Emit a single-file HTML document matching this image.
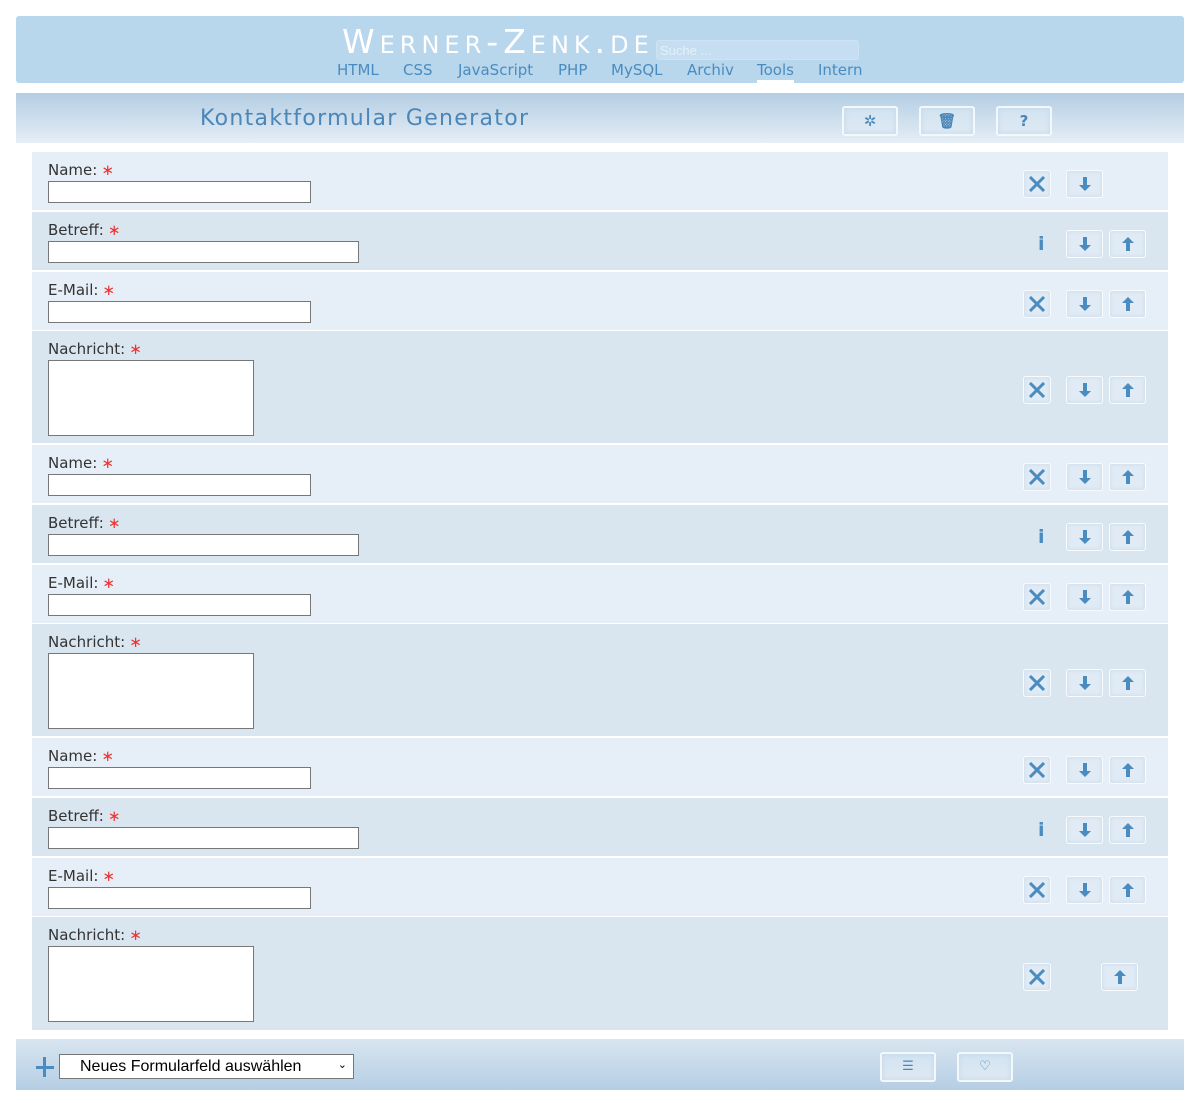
<!DOCTYPE html>
<html><head><meta charset="utf-8"><style>
*{box-sizing:border-box;margin:0;padding:0}
body{width:1201px;height:1103px;background:#fff;font-family:"DejaVu Sans","Liberation Sans",sans-serif;position:relative;overflow:hidden}
.hdr{position:absolute;left:16px;top:16px;width:1168px;height:67px;background:#b8d6ec;border-radius:3px}
.logo{position:absolute;left:342px;top:22px;color:#fff;font-size:33px;letter-spacing:5px;font-family:"DejaVu Sans",sans-serif;line-height:40px}
.logo small{font-size:24px}
.search{position:absolute;left:656px;top:40px;width:203px;height:20px;background:#c5def1;border:1px solid #cfe3f3;border-radius:3px;color:#e4f0f9;font:13px "Liberation Sans",sans-serif;padding:2px 3px}
.nav{position:absolute;top:60px;font-size:15px;color:#4a8cc0;line-height:20px}
.bar{position:absolute;left:16px;top:93px;width:1168px;height:50px;background:linear-gradient(#b4cde3,#e5eef6)}
.title{position:absolute;left:200px;top:106px;font-size:22px;letter-spacing:1.3px;color:#4a86b8}
.tb{position:absolute;width:56px;height:30px;background:linear-gradient(#d3e3f1,#deeaf4);border:2px solid #f3f8fc;border-radius:3px;box-shadow:inset 0 0 6px #c3d6e8;color:#4a86b8;text-align:center;font-size:15px;line-height:26px;font-weight:bold}
.row{position:absolute;left:32px;width:1136px}
.a{background:#e6eff7}.b{background:#d9e6f0}
.lbl{position:absolute;left:16px;top:9px;font-size:15px;color:#333}
.lbl i{font-style:normal;color:#e33;margin-left:4px}
.inp{position:absolute;left:16px;top:29px;height:22px;background:#fff;border:1px solid #777}
.ta{position:absolute;left:16px;top:29px;width:206px;height:76px;background:#fff;border:1px solid #777}
.bt{position:absolute;height:28px;background:#e0ebf5;border:1px solid #f8fbfd;border-radius:3px;box-shadow:inset 0 0 5px #cbdcea}
.bt svg{display:block;margin:auto;margin-top:5px}
.info{position:absolute;left:1006px;font-size:19px;font-weight:bold;color:#4a8cc0}
.foot{position:absolute;left:16px;top:1039px;width:1168px;height:51px;background:linear-gradient(#d8e5f0,#b5cee4)}
</style></head><body>
<div class="hdr"></div>
<div class="logo">W<small>ERNER</small>-Z<small>ENK</small>.<small>DE</small></div>
<div class="search">Suche ...</div>
<div class="nav" style="left:337px">HTML</div>
<div class="nav" style="left:403px">CSS</div>
<div class="nav" style="left:458px">JavaScript</div>
<div class="nav" style="left:558px">PHP</div>
<div class="nav" style="left:611px">MySQL</div>
<div class="nav" style="left:687px">Archiv</div>
<div class="nav" style="left:757px;border-bottom:3px solid #fff">Tools</div>
<div class="nav" style="left:818px">Intern</div>
<div class="bar"></div>
<div class="title">Kontaktformular Generator</div>
<div class="tb" style="left:842px;top:106px">✲</div>
<div class="tb" style="left:919px;top:106px">🗑</div>
<div class="tb" style="left:996px;top:106px">?</div>

<div id="rows"></div>
<script>
(function(){
var X='<svg width="18" height="16" viewBox="0 0 18 16"><path d="M2 1L16 15M16 1L2 15" stroke="#4a8cc0" stroke-width="3"/></svg>';
var D='<svg width="12" height="16" viewBox="0 0 12 16"><path d="M4 1h4v8h4l-6 6-6-6h4z" fill="#4a8cc0"/></svg>';
var U='<svg width="12" height="16" viewBox="0 0 12 16"><path d="M4 15h4V7h4L6 1 0 7h4z" fill="#4a8cc0"/></svg>';
var t=[["Name:",263],["Betreff:",311],["E-Mail:",263],["Nachricht:",0]];
var tops=[152,212,272,331,445,505,565,624,738,798,858,917];
var h='';
for(var i=0;i<12;i++){var k=i%4,tp=tops[i],ht=k==3?(i==11?113:112):58;
var cy=Math.round(ht/2)+3;
h+='<div class="row '+(i%2?'b':'a')+'" style="top:'+tp+'px;height:'+ht+'px"><div class="lbl">'+t[k][0]+'<i>∗</i></div>';
h+=k==3?'<div class="ta"></div>':'<div class="inp" style="width:'+t[k][1]+'px"></div>';
if(k==1)h+='<div class="info" style="top:'+(cy-11)+'px">i</div>';
else h+='<div class="bt" style="left:991px;width:28px;top:'+(cy-14)+'px">'+X+'</div>';
if(i<11)h+='<div class="bt" style="left:1034px;width:37px;top:'+(cy-14)+'px">'+D+'</div>';
if(i>0)h+='<div class="bt" style="left:'+(i==11?1069:1077)+'px;width:37px;top:'+(cy-14)+'px">'+U+'</div>';
h+='</div>';}
document.getElementById('rows').innerHTML=h;
})();
</script>
<div class="foot"></div>
<div style="position:absolute;left:36px;top:1057px;width:18px;height:20px">
<div style="position:absolute;left:7px;top:0;width:3px;height:20px;background:#4a8cc0"></div>
<div style="position:absolute;left:0;top:9px;width:18px;height:3px;background:#4a8cc0"></div></div>
<div style="position:absolute;left:59px;top:1054px;width:295px;height:25px;background:#fff;border:1px solid #777;font:16px 'Liberation Sans',sans-serif;padding:3px 0 0 20px;color:#000">Neues Formularfeld auswählen<span style="position:absolute;right:6px;top:3px;font-size:11px">⌄</span></div>
<div class="tb" style="left:880px;top:1052px;height:30px;font-size:13px;font-weight:normal">☰</div>
<div class="tb" style="left:957px;top:1052px;height:30px;font-size:13px;font-weight:normal">♡</div>
</body></html>
